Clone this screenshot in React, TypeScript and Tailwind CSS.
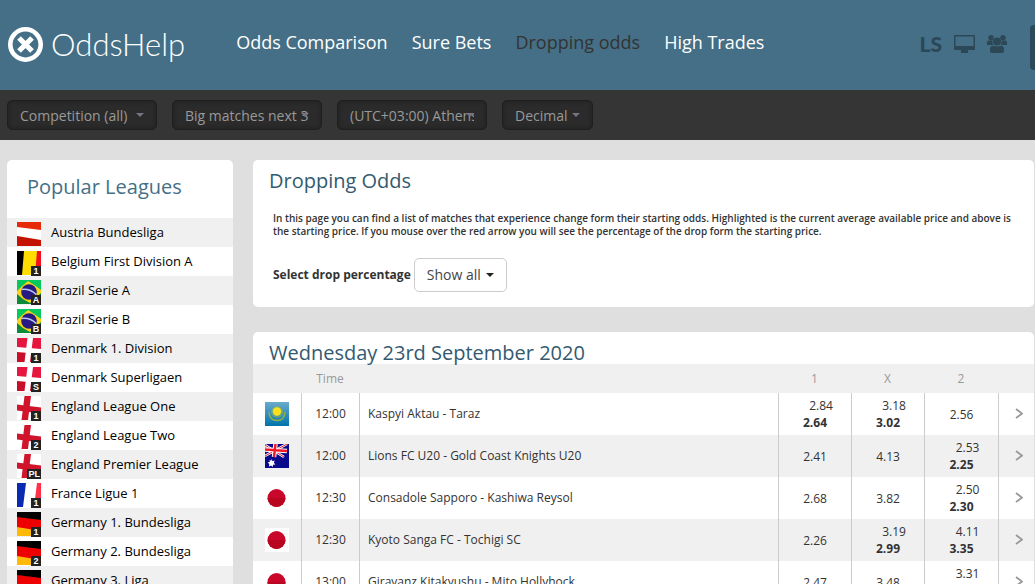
import React from "react";

type FlagCode = "at" | "be" | "br" | "dk" | "en" | "fr" | "de" | "kz" | "au" | "jp";

type League = { name: string; flag: FlagCode; badge?: string };

type Price = { start?: string; current: string };

type Match = { time: string; teams: string; flag: FlagCode; prices: Price[] };

const leagues: League[] = [
  { name: "Austria Bundesliga", flag: "at" },
  { name: "Belgium First Division A", flag: "be", badge: "1" },
  { name: "Brazil Serie A", flag: "br", badge: "A" },
  { name: "Brazil Serie B", flag: "br", badge: "B" },
  { name: "Denmark 1. Division", flag: "dk", badge: "1" },
  { name: "Denmark Superligaen", flag: "dk", badge: "S" },
  { name: "England League One", flag: "en", badge: "1" },
  { name: "England League Two", flag: "en", badge: "2" },
  { name: "England Premier League", flag: "en", badge: "PL" },
  { name: "France Ligue 1", flag: "fr", badge: "1" },
  { name: "Germany 1. Bundesliga", flag: "de", badge: "1" },
  { name: "Germany 2. Bundesliga", flag: "de", badge: "2" },
  { name: "Germany 3. Liga", flag: "de", badge: "3" },
];

const matches: Match[] = [
  {
    time: "12:00",
    teams: "Kaspyi Aktau - Taraz",
    flag: "kz",
    prices: [{ start: "2.84", current: "2.64" }, { start: "3.18", current: "3.02" }, { current: "2.56" }],
  },
  {
    time: "12:00",
    teams: "Lions FC U20 - Gold Coast Knights U20",
    flag: "au",
    prices: [{ current: "2.41" }, { current: "4.13" }, { start: "2.53", current: "2.25" }],
  },
  {
    time: "12:30",
    teams: "Consadole Sapporo - Kashiwa Reysol",
    flag: "jp",
    prices: [{ current: "2.68" }, { current: "3.82" }, { start: "2.50", current: "2.30" }],
  },
  {
    time: "12:30",
    teams: "Kyoto Sanga FC - Tochigi SC",
    flag: "jp",
    prices: [{ current: "2.26" }, { start: "3.19", current: "2.99" }, { start: "4.11", current: "3.35" }],
  },
  {
    time: "13:00",
    teams: "Giravanz Kitakyushu - Mito Hollyhock",
    flag: "jp",
    prices: [{ current: "2.47" }, { current: "3.48" }, { start: "3.31", current: "2.90" }],
  },
];

const navLinks = ["Odds Comparison", "Sure Bets", "Dropping odds", "High Trades"];

const filters = [
  { label: "Competition", value: "Competition (all)", width: "w-[150px]" },
  { label: "Matches", value: "Big matches next 3", width: "w-[150px]" },
  { label: "Time zone", value: "(UTC+03:00) Athens", width: "w-[150px]" },
  { label: "Odds format", value: "Decimal", width: "w-[91px]" },
];

function FlagShapes({ code }: { code: FlagCode }) {
  switch (code) {
    case "at":
      return (
        <>
          <rect width="24" height="24" fill="#e62a08" />
          <path d="M0 13 24 17V24H0z" fill="#c41200" />
          <path d="M0 5 24 8V18L0 14z" fill="#fff" />
        </>
      );
    case "be":
      return (
        <>
          <rect width="24" height="24" fill="#ffdd00" />
          <path d="M0 0H7L5 24H0z" fill="#000" />
          <path d="M20 0H24V24H18z" fill="#f5101c" />
        </>
      );
    case "br":
      return (
        <>
          <rect width="24" height="24" fill="#0c8a3a" />
          <path d="M0 0H24V10H0z" fill="#06c95d" />
          <path d="M11 1Q18 5 24 10V13Q19 18 13 23Q6 20 0 14V11Q5 6 11 1z" fill="#fad416" />
          <circle cx="12" cy="12" r="7.8" fill="#271a83" />
          <path d="M4.500 9.500Q13 8.500 19.200 14.500" stroke="#b9c7ee" strokeWidth="1.500" fill="none" />
        </>
      );
    case "dk":
      return (
        <>
          <rect width="24" height="24" fill="#e5173f" />
          <path d="M0 14H24V24H0z" fill="#c90e2c" />
          <path d="M0 9 24 11V16L0 14z" fill="#fff" />
          <path d="M10.500 0H16L13 24H7.500z" fill="#fff" />
        </>
      );
    case "en":
      return (
        <>
          <rect width="24" height="24" fill="#fff" />
          <path d="M0 8.500 24 11.500V17.500L0 14.500z" fill="#d0142c" />
          <path d="M7.500 0H14L11 24H4.500z" fill="#d0142c" />
        </>
      );
    case "fr":
      return (
        <>
          <rect width="24" height="24" fill="#fff" />
          <path d="M0 0H9L6 24H0z" fill="#0a2ab4" />
          <path d="M20 0H24V24H17z" fill="#ff3048" />
        </>
      );
    case "de":
      return (
        <>
          <rect width="24" height="24" fill="#e00" />
          <path d="M0 0H24V8L0 5z" fill="#000" />
          <path d="M0 15 24 19V24H0z" fill="#ffba08" />
        </>
      );
    case "kz":
      return (
        <>
          <defs>
            <linearGradient id="kz-sky" x2="0" y2="1">
              <stop stopColor="#6aaacb" />
              <stop offset="1" stopColor="#0074ac" />
            </linearGradient>
          </defs>
          <rect width="24" height="24" fill="url(#kz-sky)" />
          <path d="M4 10Q4.500 18.500 12 18.500Q19.500 18.500 20 10" stroke="#8fb048" strokeWidth="1.500" fill="none" />
          <circle cx="12" cy="10" r="6" fill="#9bb84a" opacity="0.5" />
          <circle cx="12" cy="9.500" r="4.200" fill="#fbe01c" />
        </>
      );
    case "au":
      return (
        <>
          <rect width="24" height="24" fill="#0a0a8c" />
          <path d="M0 1 19 13M0 12 22 0" stroke="#fff" strokeWidth="2.500" />
          <path d="M0 1 19 13M0 12 22 0" stroke="#e8202c" strokeWidth="1" />
          <path d="M0 5.500 22 7M10.500 0 9 13" stroke="#fff" strokeWidth="4.500" />
          <path d="M0 5.500 22 7M10.500 0 9 13" stroke="#f01824" strokeWidth="2.500" />
          <path
            d="m6.500 15 1 2.200 2.300-.6-1 2.200 1.600 1.600-2.300.3-.4 2.300-1.600-1.600-2.200 1 .4-2.300-1.600-1.500 2.200-.8-.3-2.100 1.500 1z"
            fill="#fff"
          />
        </>
      );
    case "jp":
      return (
        <>
          <rect width="24" height="24" fill="#fff" />
          <circle cx="11.500" cy="12" r="9" fill="#c9072a" />
          <path d="M2.500 12a9 9 0 0 0 18 0z" fill="#b80620" />
        </>
      );
  }
}

function Flag({ code, badge }: { code: FlagCode; badge?: string }) {
  return (
    <span className="relative block size-6 shrink-0">
      <svg viewBox="0 0 24 24" className="size-6" aria-hidden="true">
        <FlagShapes code={code} />
      </svg>
      {badge && (
        <span className="absolute right-0 -bottom-px flex h-[10px] min-w-[10px] items-center justify-center bg-[#222] px-px font-['Liberation_Sans',sans-serif] text-[9px] leading-none font-bold text-white">
          {badge}
        </span>
      )}
    </span>
  );
}

function Caret({ className }: { className: string }) {
  return (
    <svg viewBox="0 0 8 4" className={`pointer-events-none absolute h-1 w-2 ${className}`} aria-hidden="true">
      <path d="M0 0H8L4 4z" fill="currentColor" />
    </svg>
  );
}

function Logo() {
  return (
    <a href="#" className="flex items-center gap-2 text-white">
      <svg viewBox="0 0 35 35" className="size-[35px]" aria-hidden="true">
        <circle cx="17.500" cy="17.500" r="15.200" fill="none" stroke="currentColor" strokeWidth="4.600" />
        <path d="M11 11 24 24M24 11 11 24" stroke="currentColor" strokeWidth="5.200" />
      </svg>
      <span className="font-['Lato',sans-serif] text-[31px] leading-8 font-light">OddsHelp</span>
    </a>
  );
}

function Header() {
  return (
    <header className="flex h-[90px] items-center bg-[#446f86] pb-[2px] pl-2">
      <Logo />
      <nav className="ml-[51px] flex gap-6 pb-1 text-lg">
        {navLinks.map((link) => (
          <a key={link} href="#" className={link === "Dropping odds" ? "text-[#333]" : "text-white"}>
            {link}
          </a>
        ))}
      </nav>
      <div className="ml-auto flex items-center gap-3 text-[#2c4857]">
        <a href="#" className="font-['Lato',sans-serif] text-[21px] leading-5 font-black">
          LS
        </a>
        <a href="#" aria-label="Desktop">
          <svg viewBox="0 0 21 18" className="h-[18px] w-[21px]" fill="currentColor" aria-hidden="true">
            <path
              fillRule="evenodd"
              d="M1 0H20Q21 0 21 1V14Q21 15 20 15H14V16.500Q14.500 17 14 18H7Q6.500 17 7 16.500V15H1Q0 15 0 14V1Q0 0 1 0zM1.500 1.500V11H19.500V1.500z"
            />
          </svg>
        </a>
        <a href="#" aria-label="Community">
          <svg viewBox="0 0 20 18" className="h-[18px] w-5" fill="currentColor" aria-hidden="true">
            <circle cx="4" cy="2.700" r="2.700" />
            <circle cx="16" cy="2.700" r="2.700" />
            <path d="M1.500 5.500H5.500Q5 8 6.500 10H0V7.500Q0 6 1.500 5.500zM18.500 5.500H14.500Q15 8 13.500 10H20V7.500Q20 6 18.500 5.500z" />
            <circle cx="10" cy="6.500" r="4" />
            <path d="M6 10.700Q10 12.300 14 10.700Q17 11 17 14.500V16Q17 18 15 18H5Q3 18 3 16V14.500Q3 11 6 10.700z" />
          </svg>
        </a>
        <button type="button" aria-label="Account" className="mt-[6px] ml-[11px] h-[45px] w-[5px] rounded-l bg-[#2b4b5b]" />
      </div>
    </header>
  );
}

function FilterBar() {
  return (
    <div className="flex h-[50px] items-center gap-[15px] bg-[#353535] px-[7px]">
      {filters.map((filter) => (
        <div key={filter.label} className="relative">
          <select
            aria-label={filter.label}
            className={`${filter.width} block h-[30px] appearance-none rounded-[5px] border border-[#1f1f1f] bg-[#2b2b2b] px-3 pt-[2px] text-sm text-[#999] shadow-[inset_0_0_4px_#1f1f1f]`}
          >
            <option>{filter.value}</option>
          </select>
          <Caret className="top-[13px] right-[13px] text-[#777380]" />
        </div>
      ))}
    </div>
  );
}

function LeagueList() {
  return (
    <aside className="w-[226px] shrink-0 overflow-hidden rounded-[5px] bg-white">
      <h2 className="h-[58px] px-5 pt-3 text-xl leading-[30px] text-[#446f86]">Popular Leagues</h2>
      <ul>
        {leagues.map((league) => (
          <li key={league.name} className="odd:bg-[#f0f0f0]">
            <a href="#" className="flex h-[29px] items-center gap-[10px] px-[10px] text-[13px] text-black">
              <span className="pt-[3px]">
                <Flag code={league.flag} badge={league.badge} />
              </span>
              {league.name}
            </a>
          </li>
        ))}
      </ul>
    </aside>
  );
}

function Intro() {
  return (
    <section className="rounded-[5px] bg-white px-4 pt-1 pb-[15px]">
      <h1 className="text-xl leading-[34px] text-[#335a70]">Dropping Odds</h1>
      <div className="px-1 pt-[14px]">
        <p className="text-[10px] leading-[13px] font-semibold">
          In this page you can find a list of matches that experience change form their starting odds. Highlighted is the
          current average available price and above is the starting price. If you mouse over the red arrow you will see
          the percentage of the drop form the starting price.
        </p>
        <div className="mt-5 flex items-center gap-[3px]">
          <label htmlFor="drop" className="text-xs font-bold">
            Select drop percentage
          </label>
          <div className="relative">
            <select
              id="drop"
              className="block h-[34px] w-[93px] appearance-none rounded-[5px] border border-[#ccc] bg-white px-3 text-sm text-[#444]"
            >
              <option>Show all</option>
            </select>
            <Caret className="top-[15px] right-[13px] text-[#222]" />
          </div>
        </div>
      </div>
    </section>
  );
}

function PriceCell({ price }: { price: Price }) {
  return (
    <td className="border-l border-[#ccc] p-0 text-center leading-[17px]">
      {price.start ? (
        <>
          <div className="pl-3">{price.start}</div>
          <div className="font-bold">{price.current}</div>
        </>
      ) : (
        price.current
      )}
    </td>
  );
}

function MatchTable() {
  return (
    <section className="rounded-[5px] bg-white pt-1">
      <h2 className="relative h-7 px-4 text-xl leading-[34px] text-[#335a70]">Wednesday 23rd September 2020</h2>
      <table className="w-full table-fixed border-separate border-spacing-0 text-xs">
        <colgroup>
          <col className="w-12" />
          <col className="w-[58px]" />
          <col />
          <col className="w-[73px]" />
          <col className="w-[73px]" />
          <col className="w-[74px]" />
          <col className="w-9" />
        </colgroup>
        <thead>
          <tr className="h-[29px] bg-[#f0f0f0] text-[#999]">
            <td />
            <th className="font-normal">Time</th>
            <td />
            <th className="font-normal">1</th>
            <th className="font-normal">X</th>
            <th className="font-normal">2</th>
            <td />
          </tr>
        </thead>
        <tbody>
          {matches.map((match) => (
            <tr key={match.teams} className="h-[42px] even:bg-[#f0f0f0]">
              <td className="p-0 pl-3">
                <Flag code={match.flag} />
              </td>
              <td className="border-l border-[#ccc] p-0 text-center">{match.time}</td>
              <td className="border-l border-[#ccc] p-0 pl-2">{match.teams}</td>
              {match.prices.map((price, i) => (
                <PriceCell key={i} price={price} />
              ))}
              <td className="border-l border-[#ccc] p-0">
                <a href="#" aria-label={match.teams} className="flex justify-center pl-1 text-[#999]">
                  <svg
                    viewBox="0 0 8 12"
                    className="h-3 w-2"
                    fill="none"
                    stroke="currentColor"
                    strokeWidth="1.800"
                    aria-hidden="true"
                  >
                    <path d="M1 1 7 5.500 1 10" />
                  </svg>
                </a>
              </td>
            </tr>
          ))}
        </tbody>
      </table>
    </section>
  );
}

export default function App() {
  return (
    <div className="h-screen overflow-hidden bg-[#dfdfdf] font-['Open_Sans',sans-serif] text-[#333]">
      <Header />
      <FilterBar />
      <div className="flex items-start gap-5 pt-5 pr-px pl-[7px]">
        <LeagueList />
        <main className="flex min-w-0 flex-1 flex-col gap-[25px]">
          <Intro />
          <MatchTable />
        </main>
      </div>
    </div>
  );
}
